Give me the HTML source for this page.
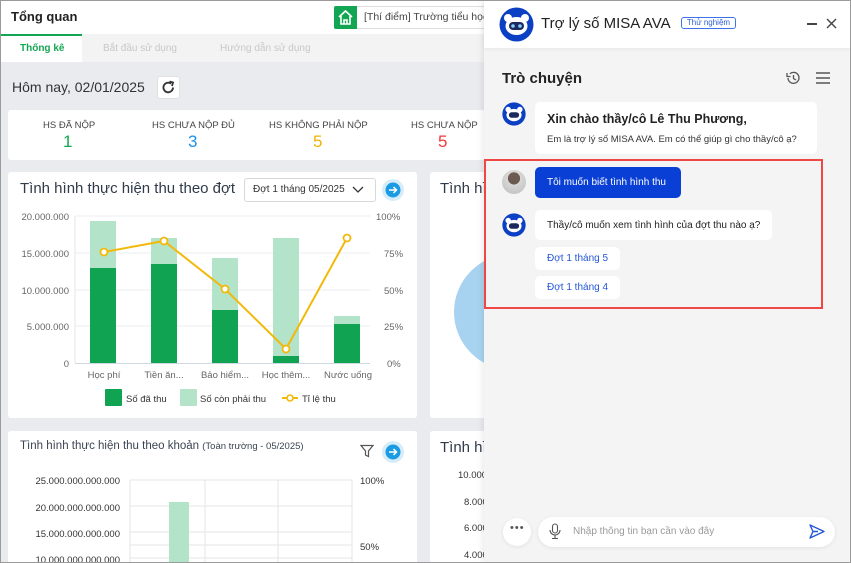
<!DOCTYPE html>
<html><head><meta charset="utf-8"><style>
*{margin:0;padding:0;box-sizing:border-box}
html,body{width:851px;height:563px;overflow:hidden}
body{font-family:"Liberation Sans",sans-serif;background:#e9ebee;position:relative}
.a{position:absolute}
.card{position:absolute;background:#fff;border-radius:3px}
.t{position:absolute;white-space:nowrap}
</style></head><body>
<!-- header -->
<div class="a" style="left:0;top:0;width:485px;height:34px;background:#fff"></div>
<div class="t" style="left:11px;top:9px;font-size:13px;font-weight:bold;color:#222">Tổng quan</div>
<div class="a" style="left:334px;top:6px;width:160px;height:23px;border:1px solid #ddd;border-radius:2px;background:#fff"></div>
<div class="a" style="left:334px;top:6px;width:23px;height:23px;background:#13a652;border-radius:2px 0 0 2px">
<svg width="23" height="23" viewBox="0 0 23 23"><path d="M5 11 L11.5 5 L18 11 M7 10 V18 H16 V10 M10 18 V14 H13 V18" fill="none" stroke="#fff" stroke-width="1.6"/></svg></div>
<div class="t" style="left:364px;top:11px;font-size:10.5px;color:#444">[Thí điểm] Trường tiểu học</div>
<!-- tabs -->
<div class="a" style="left:0;top:34px;width:485px;height:28px;background:#f3f3f3"></div>
<div class="a" style="left:0;top:34px;width:82px;height:28px;background:#fff;border-top:2px solid #13a652"></div>
<div class="t" style="left:20px;top:43px;font-size:10px;font-weight:bold;color:#13a652">Thống kê</div>
<div class="t" style="left:103px;top:43px;font-size:10px;color:#c8c8c8">Bắt đầu sử dụng</div>
<div class="t" style="left:220px;top:43px;font-size:10px;color:#c8c8c8">Hướng dẫn sử dụng</div>
<div class="t" style="left:12px;top:79px;font-size:14px;color:#333">Hôm nay, 02/01/2025</div>
<div class="a" style="left:157px;top:76px;width:23px;height:23px;background:#fff;border-radius:3px;border:1px solid #e0e0e0">
<svg width="21" height="21" viewBox="0 0 21 21"><path d="M15 10.5 A4.8 4.8 0 1 1 13 6.6" fill="none" stroke="#333" stroke-width="1.8"/><path d="M11.5 4.5 L15 5.5 L14 9" fill="none" stroke="#333" stroke-width="1.8"/></svg></div>
<!-- stats -->
<div class="card" style="left:8px;top:110px;width:477px;height:50px"></div>
<div class="t" style="left:43px;top:120px;font-size:9.5px;color:#444">HS ĐÃ NỘP</div>
<div class="t" style="left:63px;top:132px;font-size:17px;color:#13a652">1</div>
<div class="t" style="left:152px;top:120px;font-size:9.5px;color:#444">HS CHƯA NỘP ĐỦ</div>
<div class="t" style="left:188px;top:132px;font-size:17px;color:#1e90e8">3</div>
<div class="t" style="left:269px;top:120px;font-size:9.5px;color:#444">HS KHÔNG PHẢI NỘP</div>
<div class="t" style="left:313px;top:132px;font-size:17px;color:#f0b400">5</div>
<div class="t" style="left:411px;top:120px;font-size:9.5px;color:#444">HS CHƯA NỘP</div>
<div class="t" style="left:438px;top:132px;font-size:17px;color:#ef3b3b">5</div>
<!-- cards -->
<div class="card" style="left:8px;top:172px;width:409px;height:246px"></div>
<div class="card" style="left:430px;top:172px;width:60px;height:246px"></div>
<div class="card" style="left:8px;top:431px;width:409px;height:132px;border-radius:3px 3px 0 0"></div>
<div class="card" style="left:430px;top:431px;width:60px;height:132px;border-radius:3px 3px 0 0"></div>
<div class="t" style="left:20px;top:180px;font-size:15px;color:#2f3a4a">Tình hình thực hiện thu theo đợt</div>
<div class="a" style="left:244px;top:178px;width:132px;height:24px;border:1px solid #d8d8d8;border-radius:3px"></div>
<div class="t" style="left:253px;top:184px;font-size:10px;color:#333">Đợt 1 tháng 05/2025</div>
<svg class="a" style="left:352px;top:186px" width="12" height="8"><path d="M1 1 L6 6 L11 1" fill="none" stroke="#333" stroke-width="1.3"/></svg>
<div class="a" style="left:382px;top:179px;width:22px;height:22px;border-radius:50%;background:#d6ecf9"></div>
<svg class="a" style="left:385px;top:182px" width="16" height="16"><circle cx="8" cy="8" r="7.5" fill="#1a9be3"/><path d="M4 8 H11.5 M8.5 5 L11.5 8 L8.5 11" fill="none" stroke="#fff" stroke-width="1.5"/></svg>
<div class="t" style="left:440px;top:180px;font-size:15px;color:#2f3a4a">Tình hì</div>
<svg class="a" style="left:430px;top:250px" width="60" height="130"><circle cx="82" cy="62" r="29" fill="none" stroke="#a8d3f0" stroke-width="58"/></svg>
<!-- chart 1 -->
<svg class="a" style="left:0;top:0" width="485" height="420" font-family="Liberation Sans" font-size="9.5" fill="#666">
<g stroke="#e8ecf0" stroke-width="1"><line x1="75" y1="216" x2="370" y2="216"/><line x1="75" y1="253" x2="370" y2="253"/><line x1="75" y1="290" x2="370" y2="290"/><line x1="75" y1="326" x2="370" y2="326"/></g>
<line x1="75" y1="216" x2="75" y2="363" stroke="#e0e4ea"/><line x1="75" y1="363.5" x2="370" y2="363.5" stroke="#d0d8e4"/>
<g text-anchor="end"><text x="69" y="220">20.000.000</text><text x="69" y="257">15.000.000</text><text x="69" y="294">10.000.000</text><text x="69" y="330">5.000.000</text><text x="69" y="367">0</text></g>
<g><text x="376" y="220">100%</text><text x="384" y="257">75%</text><text x="384" y="294">50%</text><text x="384" y="330">25%</text><text x="387" y="367">0%</text></g>
<g fill="#b3e3c8"><rect x="90" y="221" width="26" height="142"/><rect x="151" y="238" width="26" height="125"/><rect x="212" y="258" width="26" height="105"/><rect x="273" y="238" width="26" height="125"/><rect x="334" y="316" width="26" height="47"/></g>
<g fill="#10a452"><rect x="90" y="268" width="26" height="95"/><rect x="151" y="264" width="26" height="99"/><rect x="212" y="310" width="26" height="53"/><rect x="273" y="356" width="26" height="7"/><rect x="334" y="324" width="26" height="39"/></g>
<polyline points="104,252 164,241 225,289 286,349 347,238" fill="none" stroke="#f2b90a" stroke-width="2"/>
<g fill="#fff" stroke="#f2b90a" stroke-width="1.8"><circle cx="104" cy="252" r="3.5"/><circle cx="164" cy="241" r="3.5"/><circle cx="225" cy="289" r="3.5"/><circle cx="286" cy="349" r="3.5"/><circle cx="347" cy="238" r="3.5"/></g>
<g text-anchor="middle"><text x="104" y="378">Học phí</text><text x="164" y="378">Tiền ăn...</text><text x="225" y="378">Bảo hiểm...</text><text x="286" y="378">Học thêm...</text><text x="348" y="378">Nước uống</text></g>
<rect x="105" y="389" width="17" height="17" fill="#10a452" rx="1"/><text x="126" y="402" fill="#333">Số đã thu</text>
<rect x="180" y="389" width="17" height="17" fill="#b3e3c8" rx="1"/><text x="200" y="402" fill="#333">Số còn phải thu</text>
<line x1="282" y1="398" x2="298" y2="398" stroke="#f2b90a" stroke-width="2"/><circle cx="290" cy="398" r="3" fill="#fff" stroke="#f2b90a" stroke-width="1.6"/><text x="302" y="402" fill="#333">Tỉ lệ thu</text>
</svg>
<!-- chart 3 -->
<div class="t" style="left:20px;top:440px;font-size:11.5px;color:#3a4452">Tình hình thực hiện thu theo khoản <span style="font-size:9.5px">(Toàn trường - 05/2025)</span></div>
<svg class="a" style="left:360px;top:444px" width="14" height="14"><path d="M1 1.5 H13 L8.5 7 V12.5 L5.5 11 V7 Z" fill="none" stroke="#555" stroke-width="1.2"/></svg>
<div class="a" style="left:382px;top:441px;width:22px;height:22px;border-radius:50%;background:#d6ecf9"></div>
<svg class="a" style="left:385px;top:444px" width="16" height="16"><circle cx="8" cy="8" r="7.5" fill="#1a9be3"/><path d="M4 8 H11.5 M8.5 5 L11.5 8 L8.5 11" fill="none" stroke="#fff" stroke-width="1.5"/></svg>
<svg class="a" style="left:0;top:420px" width="485" height="143" font-family="Liberation Sans" font-size="9.5" fill="#333">
<g stroke="#e6e6e6"><line x1="130" y1="60" x2="352" y2="60"/><line x1="130" y1="86" x2="352" y2="86"/><line x1="130" y1="112" x2="352" y2="112"/><line x1="130" y1="125" x2="352" y2="125"/><line x1="130" y1="138" x2="352" y2="138"/><line x1="130" y1="60" x2="130" y2="143"/><line x1="205" y1="60" x2="205" y2="143"/><line x1="278" y1="60" x2="278" y2="143"/><line x1="352" y1="60" x2="352" y2="143"/></g>
<rect x="169" y="82" width="20" height="61" fill="#b3e3c8"/>
<g text-anchor="end"><text x="120" y="64">25.000.000.000.000</text><text x="120" y="91">20.000.000.000.000</text><text x="120" y="117">15.000.000.000.000</text><text x="120" y="143">10.000.000.000.000</text></g>
<text x="360" y="64">100%</text><text x="360" y="130">50%</text>
</svg>
<div class="t" style="left:440px;top:439px;font-size:15px;color:#2f3a4a">Tình hì</div>
<div class="t" style="left:458px;top:470px;font-size:9.5px;color:#333">10.000</div>
<div class="t" style="left:464px;top:497px;font-size:9.5px;color:#333">8.000</div>
<div class="t" style="left:464px;top:523px;font-size:9.5px;color:#333">6.000</div>
<div class="t" style="left:464px;top:550px;font-size:9.5px;color:#333">4.000</div>
<!-- chat panel -->
<div class="a" style="left:484px;top:0;width:367px;height:563px;background:#f4f4f4;box-shadow:-2px 0 6px rgba(0,0,0,.08)"></div>
<div class="a" style="left:484px;top:0;width:367px;height:48px;background:#fff;box-shadow:0 1px 4px rgba(0,0,0,.06)"></div>
<svg class="a" style="left:499px;top:7px" width="35" height="35" viewBox="0 0 35 35"><circle cx="17.5" cy="17.5" r="17" fill="#0b3fc4"/><circle cx="9" cy="11" r="4" fill="#fff"/><circle cx="26" cy="11" r="4" fill="#fff"/><ellipse cx="17.5" cy="19" rx="11" ry="9" fill="#fff"/><rect x="10" y="15" width="15" height="8" rx="4" fill="#1b2a5a"/><circle cx="14" cy="19" r="1.8" fill="#7fd0ff"/><circle cx="21" cy="19" r="1.8" fill="#7fd0ff"/></svg>
<div class="t" style="left:541px;top:15px;font-size:15px;color:#222">Trợ lý số MISA AVA</div>
<div class="t" style="left:681px;top:17px;width:55px;height:12px;border:1px solid #3a74e8;border-radius:3px;font-size:8px;color:#2a5fd8;text-align:center;line-height:10px">Thử nghiệm</div>
<div class="a" style="left:807px;top:23px;width:10px;height:1.5px;background:#444"></div>
<svg class="a" style="left:826px;top:18px" width="11" height="11"><path d="M1 1 L10 10 M10 1 L1 10" stroke="#444" stroke-width="1.4"/></svg>
<div class="t" style="left:502px;top:70px;font-size:15px;font-weight:bold;color:#222">Trò chuyện</div>
<svg class="a" style="left:785px;top:70px" width="16" height="16"><path d="M3 8 A5.5 5.5 0 1 0 4.8 3.8" fill="none" stroke="#555" stroke-width="1.3"/><path d="M2 3 V6.5 H5.5" fill="none" stroke="#555" stroke-width="1.3"/><path d="M8.5 5 V8.5 L11 10" fill="none" stroke="#555" stroke-width="1.3"/></svg>
<svg class="a" style="left:816px;top:72px" width="14" height="12"><path d="M0 1 H14 M0 6 H14 M0 11 H14" stroke="#555" stroke-width="1.4"/></svg>
<svg class="a" style="left:502px;top:102px" width="24" height="24" viewBox="0 0 35 35"><circle cx="17.5" cy="17.5" r="17" fill="#0b3fc4"/><circle cx="9" cy="11" r="4" fill="#fff"/><circle cx="26" cy="11" r="4" fill="#fff"/><ellipse cx="17.5" cy="19" rx="11" ry="9" fill="#fff"/><rect x="10" y="15" width="15" height="8" rx="4" fill="#1b2a5a"/></svg>
<div class="a" style="left:535px;top:102px;width:282px;height:52px;background:#fff;border-radius:5px"></div>
<div class="t" style="left:547px;top:112px;font-size:12.5px;font-weight:bold;color:#222">Xin chào thầy/cô Lê Thu Phương,</div>
<div class="t" style="left:547px;top:134px;font-size:9.5px;color:#333">Em là trợ lý số MISA AVA. Em có thể giúp gì cho thầy/cô ạ?</div>
<div class="a" style="left:484px;top:159px;width:339px;height:150px;border:2px solid #ef4646"></div>
<div class="a" style="left:502px;top:170px;width:24px;height:24px;border-radius:50%;background:radial-gradient(circle at 50% 35%,#6b5a50 0 30%,#d8d8d8 32%,#bbb 100%)"></div>
<div class="a" style="left:535px;top:167px;width:146px;height:31px;background:#0a3fd6;border-radius:5px"></div>
<div class="t" style="left:547px;top:177px;font-size:10px;color:#fff">Tôi muốn biết tình hình thu</div>
<svg class="a" style="left:502px;top:213px" width="24" height="24" viewBox="0 0 35 35"><circle cx="17.5" cy="17.5" r="17" fill="#0b3fc4"/><circle cx="9" cy="11" r="4" fill="#fff"/><circle cx="26" cy="11" r="4" fill="#fff"/><ellipse cx="17.5" cy="19" rx="11" ry="9" fill="#fff"/><rect x="10" y="15" width="15" height="8" rx="4" fill="#1b2a5a"/></svg>
<div class="a" style="left:535px;top:210px;width:237px;height:30px;background:#fff;border-radius:5px"></div>
<div class="t" style="left:547px;top:220px;font-size:10px;color:#222">Thầy/cô muốn xem tình hình của đợt thu nào ạ?</div>
<div class="a" style="left:535px;top:247px;width:85px;height:23px;background:#fff;border-radius:5px"></div>
<div class="t" style="left:547px;top:253px;font-size:10px;color:#2456d6">Đợt 1 tháng 5</div>
<div class="a" style="left:535px;top:276px;width:85px;height:23px;background:#fff;border-radius:5px"></div>
<div class="t" style="left:547px;top:282px;font-size:10px;color:#2456d6">Đợt 1 tháng 4</div>
<!-- input -->
<div class="a" style="left:503px;top:518px;width:28px;height:28px;border-radius:50%;background:#fff;box-shadow:0 1px 4px rgba(0,0,0,.08)"></div>
<div class="t" style="left:510px;top:522px;font-size:11px;color:#555;letter-spacing:1px">•••</div>
<div class="a" style="left:538px;top:517px;width:297px;height:30px;border-radius:15px;background:#fff;box-shadow:0 1px 4px rgba(0,0,0,.08)"></div>
<svg class="a" style="left:548px;top:523px" width="14" height="17"><rect x="4.5" y="1" width="5" height="9" rx="2.5" fill="none" stroke="#555" stroke-width="1.1"/><path d="M2 7 A5 5 0 0 0 12 7 M7 12 V15 M4 15.5 H10" fill="none" stroke="#555" stroke-width="1.1"/></svg>
<div class="t" style="left:573px;top:526px;font-size:10px;color:#9a9a9a">Nhập thông tin bạn cần vào đây</div>
<svg class="a" style="left:809px;top:524px" width="16" height="15"><path d="M1 1 L15 7.5 L1 14 L4 7.5 Z M4 7.5 H9" fill="none" stroke="#2456d6" stroke-width="1.4" stroke-linejoin="round"/></svg>
<div class="a" style="left:0;top:0;width:851px;height:563px;border:1px solid #9a9a9a;z-index:50;pointer-events:none"></div>
</body></html>
